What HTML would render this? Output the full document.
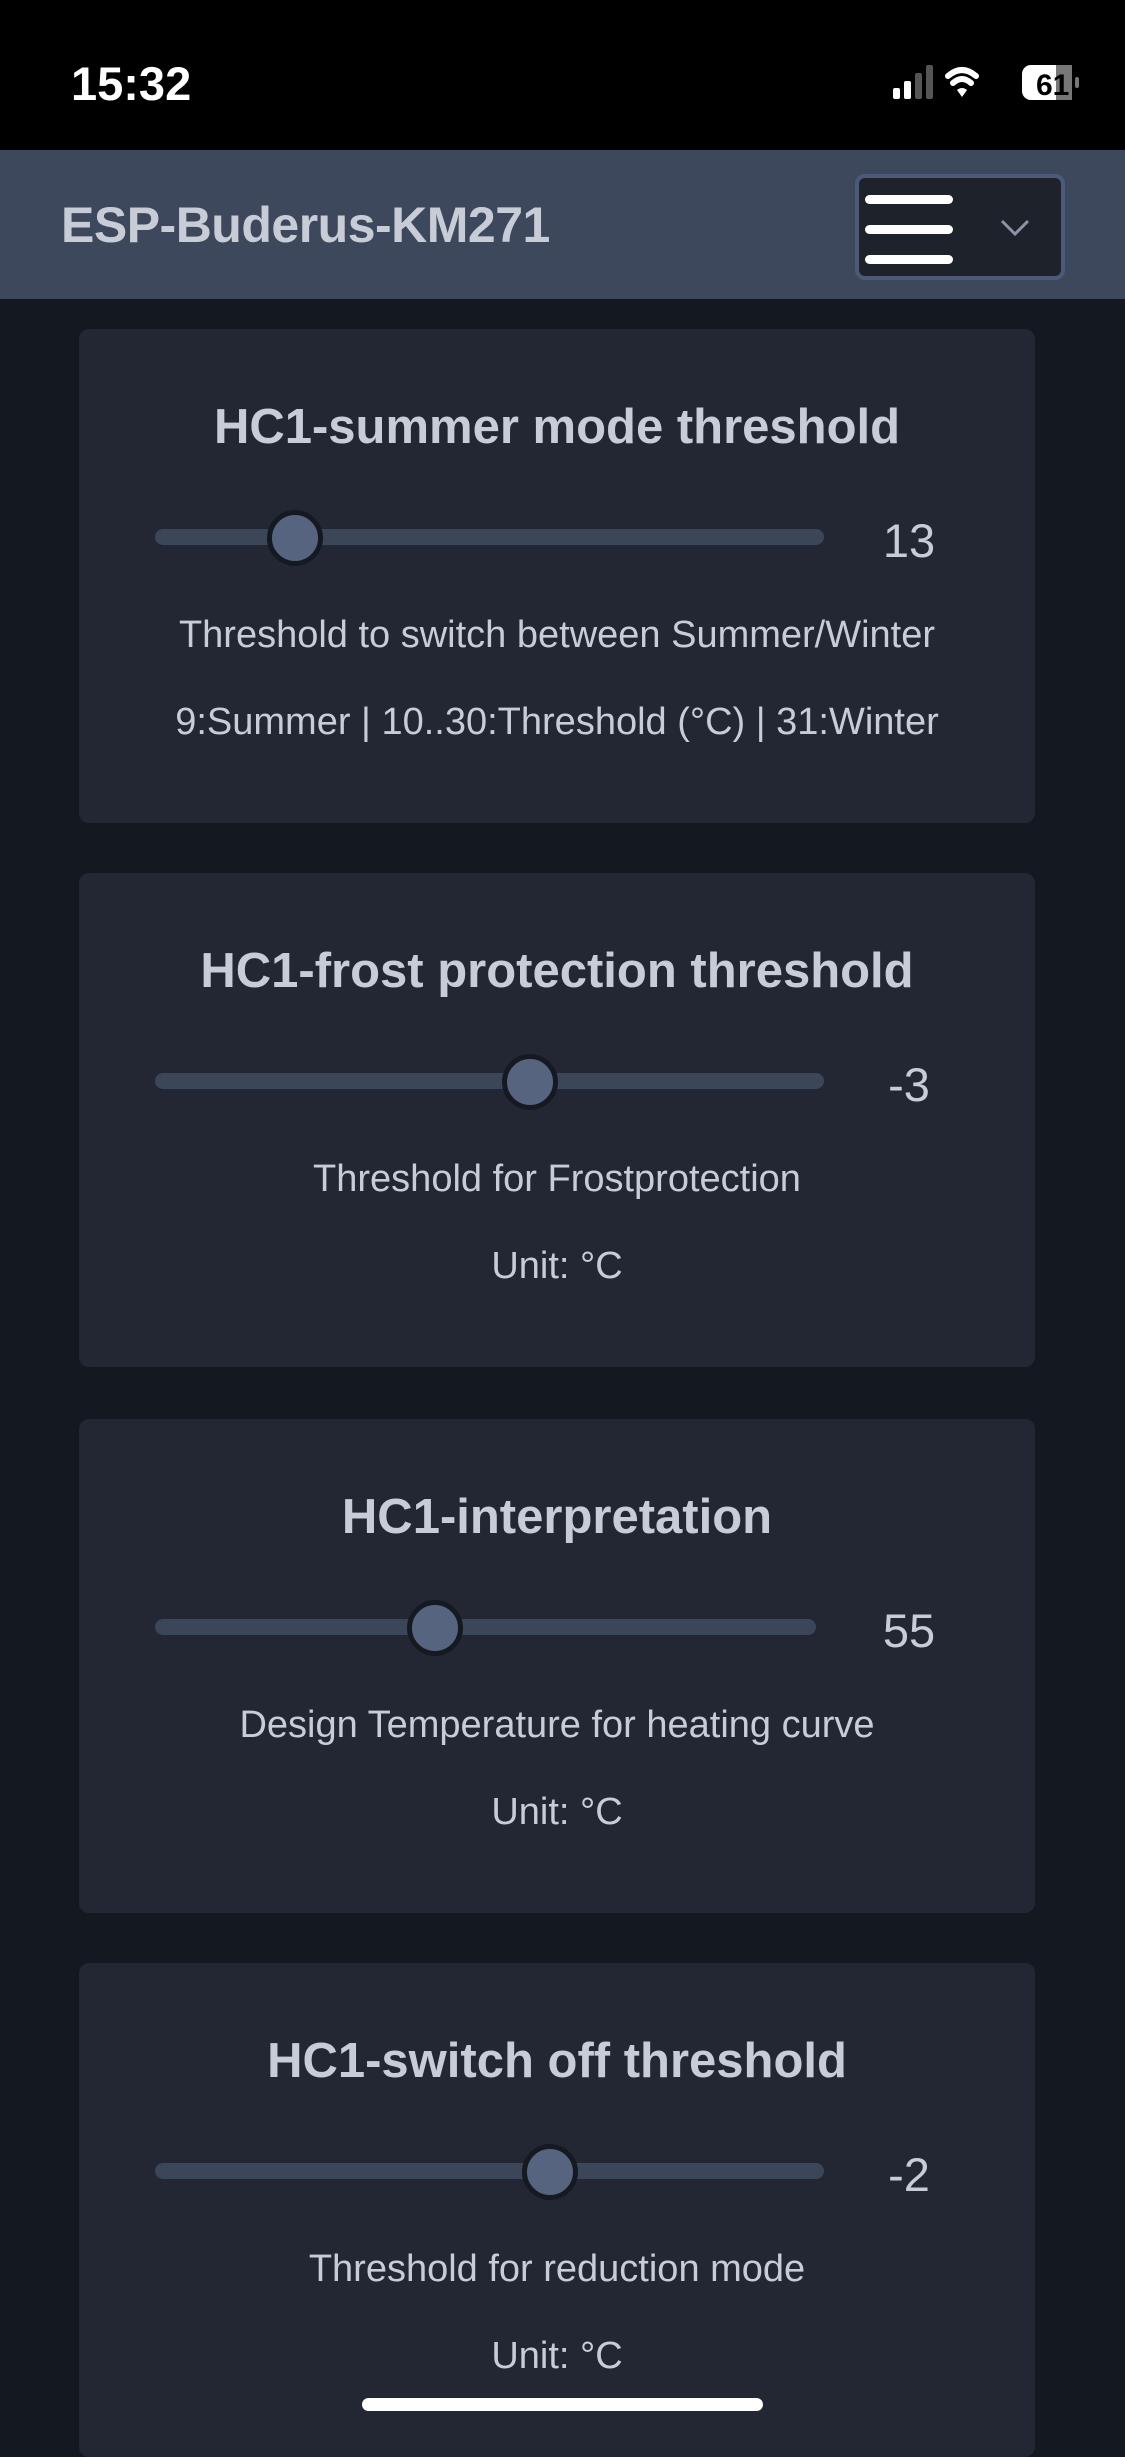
<!DOCTYPE html>
<html><head><meta charset="utf-8"><style>
*{margin:0;padding:0;box-sizing:border-box}
body{width:1125px;height:2436px;background:#141820;font-family:"Liberation Sans",sans-serif;position:relative;overflow:hidden}
.sb{position:absolute;left:0;top:0;width:1125px;height:150px;background:#000}
.time{position:absolute;left:71px;top:56px;color:#fff;font-size:47px;font-weight:bold}
.hdr{position:absolute;left:0;top:150px;width:1125px;height:149px;background:#3d485c}
.title{position:absolute;left:61px;top:46px;color:#c8ccd6;font-size:50px;font-weight:bold;letter-spacing:-0.5px}
.menu{position:absolute;left:855px;top:24px;width:210px;height:106px;background:#1e222b;border:4px solid #4a5a78;border-radius:10px}
.menu i{position:absolute;left:6px;width:88px;height:9px;background:#fff;border-radius:5px}
.card{position:absolute;left:79px;width:956px;height:494px;background:#222733;border-radius:10px}
.card h2{position:absolute;left:0;right:0;top:70px;text-align:center;color:#c8ccd6;font-size:49px;font-weight:bold}
.track{position:absolute;left:76px;top:200px;height:16px;background:#3c4659;border-radius:8px}
.thumb{position:absolute;top:181px;width:56px;height:56px;border-radius:50%;background:#56647f;border:5px solid #151a22;margin-left:-28px}
.val{position:absolute;left:780px;width:100px;top:184px;text-align:center;color:#c8ccd6;font-size:47px}
.d{position:absolute;left:0;right:0;text-align:center;color:#c8ccd6;font-size:38px}
.home{position:absolute;left:362px;top:2398px;width:401px;height:13px;background:#fff;border-radius:7px}
</style></head><body>
<div class="sb"><div class="time">15:32</div>
<svg style="position:absolute;left:890px;top:62px" width="200" height="44" viewBox="0 0 200 44">
<rect x="3" y="26" width="7" height="11" rx="2" fill="#fff"/><rect x="14" y="19" width="7" height="18" rx="2" fill="#fff"/><rect x="25" y="11" width="7" height="26" rx="2" fill="#555"/><rect x="36" y="3" width="7" height="34" rx="2" fill="#555"/>
<path d="M58 14 Q72 2 86 14" stroke="#fff" stroke-width="6" fill="none" stroke-linecap="round"/><path d="M63 21 Q72 13 81 21" stroke="#fff" stroke-width="6" fill="none" stroke-linecap="round"/><path d="M67 28 L72 35 L77 28 Q72 24 67 28Z" fill="#fff"/>
<rect x="132" y="3" width="50" height="35" rx="9" fill="#fff"/><rect x="166" y="3" width="16" height="35" fill="#777"/><rect x="185" y="15" width="4" height="11" rx="2" fill="#777"/>
<text x="146" y="33" font-family="Liberation Sans" font-weight="bold" font-size="30" fill="#000">61</text></svg>
</div>
<div class="hdr"><div class="title">ESP-Buderus-KM271</div>
<div class="menu"><i style="top:17px"></i><i style="top:47px"></i><i style="top:77px"></i>
<svg style="position:absolute;left:140px;top:38px" width="32" height="24"><path d="M3 5 L16 18 L29 5" stroke="#8b93a5" stroke-width="3" fill="none"/></svg></div></div>

<div class="card" style="top:329px"><h2>HC1-summer mode threshold</h2>
<div class="track" style="width:669px"></div><div class="thumb" style="left:216px"></div><div class="val">13</div>
<div class="d" style="top:285px">Threshold to switch between Summer/Winter</div>
<div class="d" style="top:372px">9:Summer | 10..30:Threshold (°C) | 31:Winter</div></div>

<div class="card" style="top:873px"><h2>HC1-frost protection threshold</h2>
<div class="track" style="width:669px"></div><div class="thumb" style="left:451px"></div><div class="val">-3</div>
<div class="d" style="top:285px">Threshold for Frostprotection</div>
<div class="d" style="top:372px">Unit: °C</div></div>

<div class="card" style="top:1419px"><h2>HC1-interpretation</h2>
<div class="track" style="width:661px"></div><div class="thumb" style="left:356px"></div><div class="val">55</div>
<div class="d" style="top:285px">Design Temperature for heating curve</div>
<div class="d" style="top:372px">Unit: °C</div></div>

<div class="card" style="top:1963px"><h2>HC1-switch off threshold</h2>
<div class="track" style="width:669px"></div><div class="thumb" style="left:471px"></div><div class="val">-2</div>
<div class="d" style="top:285px">Threshold for reduction mode</div>
<div class="d" style="top:372px">Unit: °C</div></div>
<div class="home"></div>
</body></html>
